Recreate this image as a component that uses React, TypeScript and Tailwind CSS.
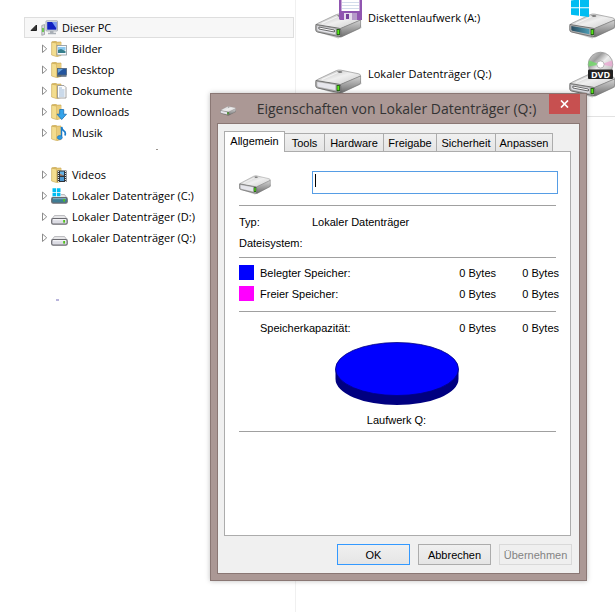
import React, { useState } from "react";

const FolderIcon = ({ children }: { children?: React.ReactNode }) => (
  <svg width="16" height="16" viewBox="0 0 16 16" className="shrink-0">
    <path d="M1 .8L5 .3l1 .9 4-.2v13.5l-4 1z" fill="#e2c168" stroke="#bf9c42" strokeWidth=".6" />
    <path d="M.6 1.2L5.5 2v13.6L.6 14z" fill="#f3dd8f" stroke="#c6a550" strokeWidth=".6" />
    <path d="M5.5 2L10 1.6v12.8l-4.5 1.2z" fill="#e9cc7b" />
    {children}
  </svg>
);

const PcIcon = () => (
  <svg width="17" height="16" viewBox="0 0 17 16" className="shrink-0">
    <path d="M.8 5.5l2.7-1v10l-2.7.8z" fill="#d5d8db" stroke="#8f9499" strokeWidth=".7" />
    <rect x="1.2" y="8" width="1.6" height="4" fill="#55c832" />
    <rect x="5" y=".8" width="11.5" height="10.2" rx=".6" fill="#dfe3e8" stroke="#8b929c" strokeWidth=".7" />
    <rect x="6.2" y="2" width="9.2" height="7.7" fill="#1020c0" />
    <path d="M11 2h4.4v6.5z" fill="#7b9cf0" />
    <path d="M9 11h3.5v1.7H15v1.5H7v-1.5h2z" fill="#a9afb6" />
  </svg>
);

const SmallDriveIcon = ({ system = false }: { system?: boolean }) => (
  <svg width="17" height="16" viewBox="0 0 17 16" className="shrink-0">
    <path d="M3.5 6.5h10l2.6 3.5H.8z" fill="#e6e6e8" stroke="#a8a8ac" strokeWidth=".7" />
    <rect x=".7" y="9.5" width="15.5" height="5.6" rx="1.4" fill={system ? "#3f7c94" : "#dcdce4"} stroke="#6a6a70" strokeWidth="1.2" />
    <path d="M2 10.7h13" stroke={system ? "#86b3c4" : "#f8f8fa"} />
    <rect x="12.2" y="11" width="1.8" height="2.6" fill="#4fc21c" />
    {system && (
      <g>
        <rect x="1" y="0" width="9" height="8.5" fill="#fff" />
        <path d="M1.5.3h3.6v3.6H1.5zM5.9.3h3.6v3.6H5.9zM1.5 4.7h3.6v3.6H1.5zM5.9 4.7h3.6v3.6H5.9z" fill="#00bdf2" />
      </g>
    )}
  </svg>
);

type FaceProps = { face?: "plain" | "slot" | "dark" };

const DriveBody = ({ face = "plain" }: FaceProps) => (
  <g>
    <path d="M2 19l22 6.5L48 15l-1-3-21 9z" fill="#000" opacity=".22" />
    <path d="M1 12Q1 11 3 10.3L22 1.6q2-.9 4.5-.5L45 4.8q2.4.6 1.8 2.4L26 16z" fill="url(#driveTop)" stroke="#959595" strokeWidth=".7" />
    <path d="M26 15.5L47 7v6.5q0 1.2-1.5 2L28 23.6q-1 .5-2 .3z" fill="url(#driveSide)" stroke="#6d6d6d" strokeWidth=".6" />
    <path d="M1 11.5l24 3.8q1.5.3 1.5 1.8v5.1q0 1.8-2 1.4L2.6 19Q.8 18.5.8 17v-4.5q0-1 .2-1z" fill="#b0b0b0" stroke="#5f5f5f" strokeWidth=".8" />
    <path d="M2.4 12.9L21 16v5.3L3.4 17.8q-1-.3-1-1.2z" fill={face === "dark" ? "url(#driveDark)" : "#e6e6ec"} />
    {face === "slot" && <path d="M4 14l16 3v2L4 16z" fill="#fff" stroke="#454545" strokeWidth=".8" />}
    <rect x="22.3" y="16" width="3.4" height="6.2" rx=".6" fill="#174d0e" />
    <rect x="23" y="16.8" width="2" height="4.4" fill="#5ae51b" />
    <ellipse cx="25.5" cy="3" rx="2.8" ry="1" fill="#7c7c7c" />
    <path d="M7 10.5L24 3.2" stroke="#fff" strokeWidth="1.2" opacity=".7" />
  </g>
);

const DriveDefs = () => (
  <svg width="0" height="0" className="absolute">
    <defs>
      <linearGradient id="driveTop" x1="0" y1="0" x2="1" y2="1">
        <stop offset="0" stopColor="#b0b0b0" />
        <stop offset=".5" stopColor="#efefef" />
        <stop offset="1" stopColor="#c8c8c8" />
      </linearGradient>
      <linearGradient id="driveSide" x1="0" y1="0" x2="0" y2="1">
        <stop offset="0" stopColor="#d4d4d4" />
        <stop offset="1" stopColor="#6f6f6f" />
      </linearGradient>
      <linearGradient id="driveDark" x1="0" y1="0" x2="1" y2="0">
        <stop offset="0" stopColor="#2a4c60" />
        <stop offset="1" stopColor="#4c9cb4" />
      </linearGradient>
      <linearGradient id="disc" x1="0" y1="0" x2="1" y2="1">
        <stop offset="0" stopColor="#e0e0e0" />
        <stop offset=".3" stopColor="#9c9c9c" />
        <stop offset=".5" stopColor="#ededed" />
        <stop offset="1" stopColor="#a8a8a8" />
      </linearGradient>
    </defs>
  </svg>
);

const FloppyDriveIcon = () => (
  <svg width="48" height="48" viewBox="0 0 48 48" className="shrink-0">
    <g transform="translate(1 19) scale(.97 1)">
      <DriveBody face="slot" />
    </g>
    <path d="M25 2h23v24H26l-1-1z" fill="#9055b0" />
    <rect x="27.5" y="2" width="18" height="15" fill="#fff" />
    <path d="M28 8.500h17M28 11.5h17M28 14.5h17" stroke="#c8d4e6" strokeWidth=".8" />
    <rect x="30" y="19" width="13" height="7" fill="#e6dcec" />
    <rect x="32" y="20" width="3" height="5" fill="#75419a" />
    <rect x="38" y="19" width="5" height="7" fill="#b69ac9" />
  </svg>
);

const LocalDriveIcon = () => (
  <svg width="48" height="48" viewBox="0 0 48 48" className="shrink-0">
    <g transform="translate(1 19) scale(.97 1)">
      <DriveBody />
    </g>
  </svg>
);

const SystemDriveIcon = () => (
  <svg width="48" height="48" viewBox="0 0 48 48" className="shrink-0">
    <g transform="translate(1 19) scale(.97 1)">
      <DriveBody face="dark" />
    </g>
    <path d="M3 6.5l8-1.2v7.9H3zM12 5.1l9-1.3v9.4h-9zM3 14.3h8v7.5l-8-1zM12 14.3h9v8.8l-9-1.2z" fill="#00bdf2" />
  </svg>
);

const DvdDriveIcon = () => (
  <svg width="48" height="48" viewBox="0 0 48 48" className="shrink-0">
    <g transform="translate(1 22) scale(.97 1)">
      <DriveBody face="slot" />
    </g>
    <circle cx="32.5" cy="14.5" r="12.3" fill="url(#disc)" stroke="#8e8e8e" strokeWidth=".7" />
    <path d="M32.5 14.5L21 10.5a12 12 0 0 0-.4 6z" fill="#71dc68" opacity=".8" />
    <path d="M32.5 14.5L44 10.5a12 12 0 0 1 .4 6z" fill="#eba2d2" opacity=".7" />
    <circle cx="32.5" cy="14.5" r="3.6" fill="#fff" stroke="#aaa" strokeWidth=".8" />
    <rect x="20" y="19.5" width="25" height="9.5" rx="1" fill="#222" />
    <text x="32.5" y="28" fill="#fff" fontSize="9" fontWeight="700" textAnchor="middle" fontFamily="'Open Sans', sans-serif">
      DVD
    </text>
  </svg>
);

const Arrow = ({ open = false }: { open?: boolean }) => (
  <svg width="8" height="10" viewBox="0 0 8 10" className="shrink-0">
    {open ? (
      <path d="M6.5 2v5.5H1z" fill="#333" stroke="#222" />
    ) : (
      <path d="M2.5 1v7.5L6.7 4.8z" fill="#fff" stroke="#8d8d8d" />
    )}
  </svg>
);

const folders = [
  {
    name: "Bilder",
    icon: (
      <FolderIcon>
        <rect x="6" y="4.5" width="9.5" height="9.5" fill="#f8fbfd" stroke="#87939c" strokeWidth=".8" />
        <path d="M7 6h7.5v3H7z" fill="#8cc8ee" />
        <path d="M7 9l3-1 4.5 2v2H7z" fill="#377f8c" />
      </FolderIcon>
    ),
  },
  {
    name: "Desktop",
    icon: (
      <FolderIcon>
        <rect x="6.5" y="6.5" width="9" height="6.5" fill="#24569f" stroke="#50657b" strokeWidth=".8" />
        <path d="M7 7h5l-5 4z" fill="#67a3dc" />
        <path d="M6 14h9.5" stroke="#3b5068" strokeWidth="1.3" />
      </FolderIcon>
    ),
  },
  {
    name: "Dokumente",
    icon: (
      <FolderIcon>
        <path d="M6.5 2.5H13L15 4.5V15H6.5z" fill="#fdfdfd" stroke="#8d8d8d" strokeWidth=".8" />
        <path d="M8 5h3M8 7h5.5M8 9h5.5M8 11h5.5M8 13h5.5" stroke="#7fa3cc" strokeWidth=".8" />
      </FolderIcon>
    ),
  },
  {
    name: "Downloads",
    icon: (
      <FolderIcon>
        <path d="M8.7 5.5h4v4.7h2.8l-4.8 5.3L6 10.2h2.7z" fill="#35a4ea" stroke="#1b6eb4" strokeWidth=".8" />
      </FolderIcon>
    ),
  },
  {
    name: "Musik",
    icon: (
      <FolderIcon>
        <path d="M10.5 2v9.5" stroke="#1a7ccb" strokeWidth="1.5" />
        <path d="M10.5 2q.5 3 2.5 4t1 4.5" fill="none" stroke="#1a7ccb" strokeWidth="1.7" />
        <ellipse cx="8.8" cy="12.5" rx="2.5" ry="2" fill="#2a9ae4" stroke="#1a6cb5" strokeWidth=".6" />
      </FolderIcon>
    ),
  },
  { name: "", icon: null },
  {
    name: "Videos",
    icon: (
      <FolderIcon>
        <rect x="6.5" y="3.5" width="9" height="11.5" fill="#30343a" />
        <path d="M7.5 4v11M14.5 4v11" stroke="#e2e5e8" strokeDasharray="1 1" />
        <rect x="9" y="4.5" width="4" height="4" fill="#66b1e4" />
        <rect x="9" y="10" width="4" height="4" fill="#4d97cf" />
        <path d="M9 7l4 1.5H9z" fill="#c2713c" />
      </FolderIcon>
    ),
  },
  { name: "Lokaler Datenträger (C:)", icon: <SmallDriveIcon system /> },
  { name: "Lokaler Datenträger (D:)", icon: <SmallDriveIcon /> },
  { name: "Lokaler Datenträger (Q:)", icon: <SmallDriveIcon /> },
];

const drives = [
  { name: "Diskettenlaufwerk (A:)", icon: <FloppyDriveIcon /> },
  { name: "", icon: <SystemDriveIcon /> },
  { name: "Lokaler Datenträger (Q:)", icon: <LocalDriveIcon /> },
  { name: "", icon: <DvdDriveIcon /> },
];

const tabs = ["Allgemein", "Tools", "Hardware", "Freigabe", "Sicherheit", "Anpassen"];

const Sidebar = () => (
  <nav className="relative w-[295px] shrink-0 pt-[17px] pl-6 pr-px">
    <button className="flex h-[21px] w-full items-center border border-[#dedede] bg-[#f7f7f7] pl-[5px] text-left">
      <Arrow open />
      <span className="ml-[3px]">
        <PcIcon />
      </span>
      <span className="ml-1">Dieser PC</span>
    </button>
    <ul>
      {folders.map((folder) => (
        <li key={folder.name} className="h-[21px] pl-4">
          {folder.name && (
            <button className="flex h-full w-full items-center text-left whitespace-nowrap">
              <Arrow />
              <span className="ml-[3px] flex w-[17px]">{folder.icon}</span>
              <span className="ml-1">{folder.name}</span>
            </button>
          )}
        </li>
      ))}
    </ul>
    <span className="absolute top-[149px] left-[156px] h-px w-0.5 bg-[#9b958f]" />
    <span className="absolute top-[299px] left-[56px] h-0.5 w-[3px] bg-[#b9b5dc]" />
  </nav>
);

const DriveList = () => (
  <main className="min-w-0 flex-1 overflow-hidden border-l border-[#f0f0f0]">
    <ul className="-mt-2.5 grid grid-cols-[254px_254px] border-b border-[#e2e2e2] pb-3.5 pl-[18px]">
      {drives.map((drive, i) => (
        <li key={i} className="flex h-14 items-center gap-1.5 whitespace-nowrap">
          {drive.icon}
          <span>{drive.name}</span>
        </li>
      ))}
    </ul>
  </main>
);

const StorageTable = () => (
  <table className="w-[320px] border-collapse text-right">
    <tbody>
      <tr className="h-[21px]">
        <td className="w-[21px]">
          <div className="size-[15px] bg-[#0000ff]" />
        </td>
        <th className="text-left font-normal">Belegter Speicher:</th>
        <td>0 Bytes</td>
        <td className="w-[63px]">0 Bytes</td>
      </tr>
      <tr className="h-[21px]">
        <td>
          <div className="size-[15px] bg-[#ff00ff]" />
        </td>
        <th className="text-left font-normal">Freier Speicher:</th>
        <td>0 Bytes</td>
        <td>0 Bytes</td>
      </tr>
      <tr className="h-[9px]">
        <td colSpan={4} />
      </tr>
    </tbody>
    <tfoot>
      <tr className="h-[29px]">
        <td />
        <th className="text-left font-normal">Speicherkapazität:</th>
        <td>0 Bytes</td>
        <td>0 Bytes</td>
      </tr>
    </tfoot>
  </table>
);

const Rule = () => <hr className="mr-0.5 border-0 border-t border-[#a0a0a0]" />;

const PropertiesDialog = () => {
  const [activeTab, setActiveTab] = useState("Allgemein");
  const [label, setLabel] = useState("");

  return (
    <section
      role="dialog"
      aria-labelledby="dialogTitle"
      className="absolute top-[93px] left-[210px] w-[377px] border border-[#8a7774] bg-[#ab9895] px-1.5 pb-1.5 shadow-[0_0_5px_rgba(0,0,0,0.25)]"
    >
      <header className="flex h-[29px] items-start">
        <svg width="16" height="10" viewBox="0 0 48 26" preserveAspectRatio="none" className="mt-3 ml-[3px] shrink-0">
          <DriveBody />
        </svg>
        <h1
          id="dialogTitle"
          className="flex-1 pl-2 text-center text-[14px] leading-[30px] whitespace-nowrap text-[#333]"
        >
          Eigenschaften von Lokaler Datenträger (Q:)
        </h1>
        <button aria-label="Schließen" className="flex h-5 w-[31px] shrink-0 items-center justify-center bg-[#c75050]">
          <svg width="9" height="8" viewBox="0 0 9 8">
            <path d="M1 .5l7 7M8 .5l-7 7" stroke="#fff" strokeWidth="1.7" />
          </svg>
        </button>
      </header>

      <div className="border border-[#8a7774] bg-[#f0f0f0] px-1.5 pt-[7px] pb-2 font-['Liberation_Sans',sans-serif] text-[11px] leading-[14px] text-black">
        <div role="tablist" className="grid grid-cols-[61px_40px_59px_53px_59px_57px] items-end">
          {tabs.map((tab) => (
            <button
              key={tab}
              role="tab"
              aria-selected={tab === activeTab}
              onClick={() => setActiveTab(tab)}
              className={
                tab === activeTab
                  ? "relative -mb-px h-[21px] border border-b-0 border-[#acacac] bg-white pb-0.5"
                  : "h-[18px] border border-b-0 border-l-0 border-[#acacac] bg-gradient-to-b from-[#f0f0f0] to-[#e5e5e5]"
              }
            >
              {tab}
            </button>
          ))}
        </div>

        <div role="tabpanel" className="mr-0.5 h-[385px] border border-[#acacac] bg-white pt-[19px] pr-3 pl-3.5">
          <div className="flex items-start justify-between">
            <svg width="32" height="20" viewBox="0 0 48 26" preserveAspectRatio="none" className="mt-1">
              <DriveBody />
            </svg>
            <div className="relative w-[246px]">
              <input
                type="text"
                aria-label="Datenträgerbezeichnung"
                value={label}
                onChange={(e) => setLabel(e.target.value)}
                className="block h-[23px] w-full border border-[#569de5] bg-white px-1 outline-none"
              />
              <span className="absolute top-[3px] left-[3px] h-[13px] w-px bg-black" />
            </div>
          </div>
          <div className="pt-[10px]">
            <Rule />
          </div>
          <dl className="grid grid-cols-[73px_1fr] pt-[6px] pb-[3px] leading-[21px]">
            <dt>Typ:</dt>
            <dd>Lokaler Datenträger</dd>
            <dt>Dateisystem:</dt>
            <dd />
          </dl>
          <Rule />
          <div className="relative pt-1">
            <StorageTable />
            <div className="absolute top-[53px] right-0 left-0">
              <Rule />
            </div>
          </div>
          <figure className="flex flex-col items-center pr-1">
            <svg width="124" height="64" viewBox="0 0 124 64">
              <path d="M.5 27v10a61.5 26 0 0 0 123 0V27z" fill="#000080" />
              <ellipse cx="62" cy="27" rx="61.5" ry="26.5" fill="#0000ff" stroke="#000080" strokeWidth=".8" />
            </svg>
            <figcaption className="pt-[7px] pb-1">Laufwerk Q:</figcaption>
          </figure>
          <Rule />
        </div>

        <footer className="flex justify-end gap-2 pt-2 pr-px">
          <button className="h-[21px] w-[73px] border border-[#3399ff] bg-gradient-to-b from-[#f0f0f0] to-[#e5e5e5]">
            OK
          </button>
          <button className="h-[21px] w-[73px] border border-[#acacac] bg-gradient-to-b from-[#f0f0f0] to-[#e5e5e5]">
            Abbrechen
          </button>
          <button disabled className="h-[21px] w-[73px] border border-[#d9d9d9] bg-[#efefef] text-[#838383]">
            Übernehmen
          </button>
        </footer>
      </div>
    </section>
  );
};

const App = () => {
  return (
    <div className="relative flex min-h-screen overflow-hidden bg-white font-['Open_Sans',sans-serif] text-[11px] leading-4 text-black">
      <DriveDefs />
      <Sidebar />
      <DriveList />
      <PropertiesDialog />
    </div>
  );
};

export default App;
